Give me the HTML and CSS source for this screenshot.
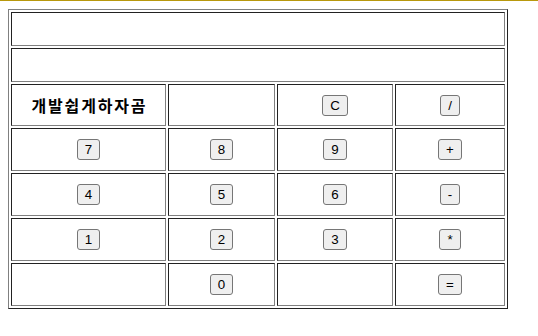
FILE: index.html
```html
<!DOCTYPE html>
<html lang="ko">
<head>
    <meta charset="UTF-8">
    <meta name="viewport" content="width=device-width, initial-scale=1.0">
    <title>계산기</title>
    <link rel="stylesheet" href="styles.css">
</head>
<body>
    <table class="calc">
        <colgroup>
            <col class="col-a">
            <col class="col-b">
            <col class="col-c">
            <col class="col-d">
        </colgroup>
        <tr class="row-short">
            <td colspan="4" id="previous"></td>
        </tr>
        <tr class="row-short">
            <td colspan="4" id="current"></td>
        </tr>
        <tr class="row-title">
            <td class="title">개발쉽게하자곰</td>
            <td></td>
            <td><button onclick="clearAll()">C</button></td>
            <td><button onclick="appendOperator('/')">/</button></td>
        </tr>
        <tr>
            <td><button onclick="appendNumber('7')">7</button></td>
            <td><button onclick="appendNumber('8')">8</button></td>
            <td><button onclick="appendNumber('9')">9</button></td>
            <td><button onclick="appendOperator('+')">+</button></td>
        </tr>
        <tr>
            <td><button onclick="appendNumber('4')">4</button></td>
            <td><button onclick="appendNumber('5')">5</button></td>
            <td><button onclick="appendNumber('6')">6</button></td>
            <td><button onclick="appendOperator('-')">-</button></td>
        </tr>
        <tr>
            <td><button onclick="appendNumber('1')">1</button></td>
            <td><button onclick="appendNumber('2')">2</button></td>
            <td><button onclick="appendNumber('3')">3</button></td>
            <td><button onclick="appendOperator('*')">*</button></td>
        </tr>
        <tr>
            <td></td>
            <td><button onclick="appendNumber('0')">0</button></td>
            <td></td>
            <td><button onclick="calculate()">=</button></td>
        </tr>
    </table>

    <script>
        let expression = '';
        const currentCell = document.getElementById('current');

        function appendNumber(n) {
            expression += n;
            currentCell.innerText = expression;
        }

        function appendOperator(op) {
            expression += op;
            currentCell.innerText = expression;
        }

        function calculate() {
            try {
                expression = String(Function('return ' + expression)());
            } catch (e) {
                expression = '';
            }
            currentCell.innerText = expression;
        }

        function clearAll() {
            expression = '';
            currentCell.innerText = '';
        }
    </script>
</body>
</html>
```

FILE: styles.css
```css
html {
    border-top: 1px solid #b8980c;
}

body {
    margin: 8px;
    background-color: #ffffff;
    font-family: "Liberation Sans", Arial, sans-serif;
}

.calc {
    table-layout: fixed;
    width: 500px;
    border-collapse: separate;
    border-spacing: 2px;
    border: 1px solid;
    border-color: #808080 #222222 #222222 #808080;
}

.col-a { width: 155px; }
.col-b { width: 107px; }
.col-c { width: 116px; }
.col-d { width: 110px; }

.calc td {
    box-sizing: border-box;
    height: 43px;
    padding: 0;
    text-align: center;
    vertical-align: middle;
    border: 1px solid;
    border-color: #222222 #808080 #808080 #222222;
}

.calc .row-short td {
    height: 34px;
}

.calc .row-title td {
    height: 42px;
}

.title {
    font-family: "Noto Sans CJK KR", "Noto Sans", sans-serif;
    font-size: 16px;
    font-weight: bold;
    letter-spacing: 1.8px;
    text-indent: 1.8px;
    color: #000000;
}

button {
    font-family: "Liberation Sans", Arial, sans-serif;
    font-size: 13.333px;
    padding: 1px 7px;
    height: 21px;
    color: #000000;
    background-color: #efefef;
    border: 1px solid #767676;
    border-radius: 3px;
}
```
